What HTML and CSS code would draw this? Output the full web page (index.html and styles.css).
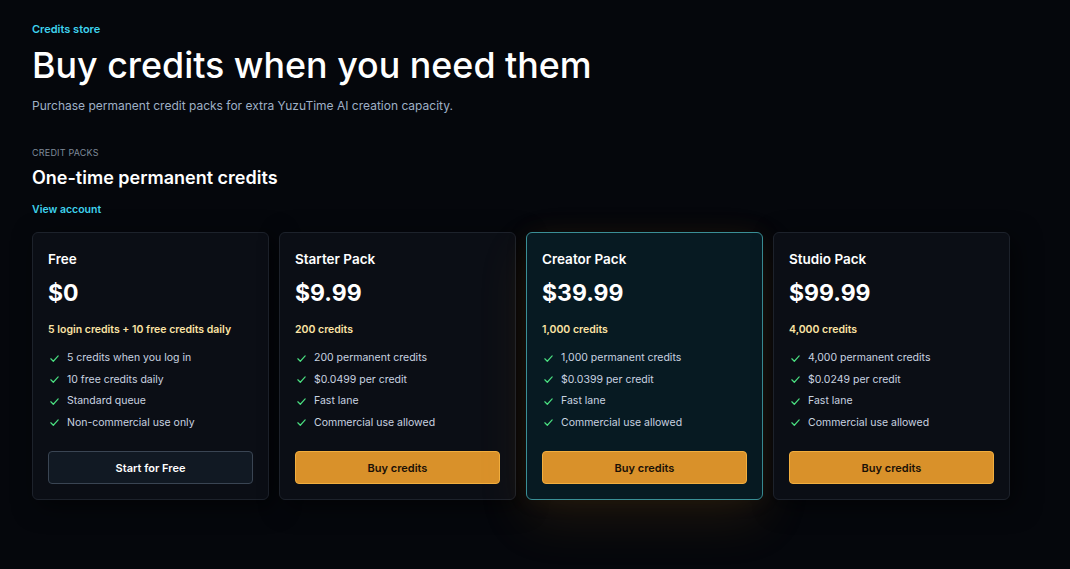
FILE: index.html
```html
<!DOCTYPE html>
<html lang="en">
<head>
<meta charset="utf-8">
<title>Credits store</title>
<link rel="stylesheet" href="styles.css">
</head>
<body>
<main class="page">
  <p class="eyebrow">Credits store</p>
  <h1 class="title">Buy credits when you need them</h1>
  <p class="subtitle">Purchase permanent credit packs for extra YuzuTime AI creation capacity.</p>

  <section class="packs">
    <p class="section-label">CREDIT PACKS</p>
    <h2 class="section-title">One-time permanent credits</h2>
    <a class="link" href="#">View account</a>

    <div class="grid">
      <div class="card">
        <h3 class="card-name">Free</h3>
        <div class="price">$0</div>
        <div class="amount">5 login credits + 10 free credits daily</div>
        <ul class="features">
          <li><svg class="check" viewBox="0 0 12 12"><path d="M2 6.3 4.7 9 10 3.2"/></svg>5 credits when you log in</li>
          <li><svg class="check" viewBox="0 0 12 12"><path d="M2 6.3 4.7 9 10 3.2"/></svg>10 free credits daily</li>
          <li><svg class="check" viewBox="0 0 12 12"><path d="M2 6.3 4.7 9 10 3.2"/></svg>Standard queue</li>
          <li><svg class="check" viewBox="0 0 12 12"><path d="M2 6.3 4.7 9 10 3.2"/></svg>Non-commercial use only</li>
        </ul>
        <button class="btn btn-ghost">Start for Free</button>
      </div>

      <div class="card">
        <h3 class="card-name">Starter Pack</h3>
        <div class="price">$9.99</div>
        <div class="amount">200 credits</div>
        <ul class="features">
          <li><svg class="check" viewBox="0 0 12 12"><path d="M2 6.3 4.7 9 10 3.2"/></svg>200 permanent credits</li>
          <li><svg class="check" viewBox="0 0 12 12"><path d="M2 6.3 4.7 9 10 3.2"/></svg>$0.0499 per credit</li>
          <li><svg class="check" viewBox="0 0 12 12"><path d="M2 6.3 4.7 9 10 3.2"/></svg>Fast lane</li>
          <li><svg class="check" viewBox="0 0 12 12"><path d="M2 6.3 4.7 9 10 3.2"/></svg>Commercial use allowed</li>
        </ul>
        <button class="btn btn-primary">Buy credits</button>
      </div>

      <div class="card card-featured">
        <h3 class="card-name">Creator Pack</h3>
        <div class="price">$39.99</div>
        <div class="amount">1,000 credits</div>
        <ul class="features">
          <li><svg class="check" viewBox="0 0 12 12"><path d="M2 6.3 4.7 9 10 3.2"/></svg>1,000 permanent credits</li>
          <li><svg class="check" viewBox="0 0 12 12"><path d="M2 6.3 4.7 9 10 3.2"/></svg>$0.0399 per credit</li>
          <li><svg class="check" viewBox="0 0 12 12"><path d="M2 6.3 4.7 9 10 3.2"/></svg>Fast lane</li>
          <li><svg class="check" viewBox="0 0 12 12"><path d="M2 6.3 4.7 9 10 3.2"/></svg>Commercial use allowed</li>
        </ul>
        <button class="btn btn-primary">Buy credits</button>
      </div>

      <div class="card">
        <h3 class="card-name">Studio Pack</h3>
        <div class="price">$99.99</div>
        <div class="amount">4,000 credits</div>
        <ul class="features">
          <li><svg class="check" viewBox="0 0 12 12"><path d="M2 6.3 4.7 9 10 3.2"/></svg>4,000 permanent credits</li>
          <li><svg class="check" viewBox="0 0 12 12"><path d="M2 6.3 4.7 9 10 3.2"/></svg>$0.0249 per credit</li>
          <li><svg class="check" viewBox="0 0 12 12"><path d="M2 6.3 4.7 9 10 3.2"/></svg>Fast lane</li>
          <li><svg class="check" viewBox="0 0 12 12"><path d="M2 6.3 4.7 9 10 3.2"/></svg>Commercial use allowed</li>
        </ul>
        <button class="btn btn-primary">Buy credits</button>
      </div>
    </div>
  </section>
</main>
</body>
</html>
```
FILE: styles.css
```css
* { box-sizing: border-box; }
html, body {
  margin: 0;
  padding: 0;
  background: #05070c;
  height: 100%;
}
body {
  font-family: Inter, "Liberation Sans", Arial, sans-serif;
  color: #f3f5f8;
  overflow: hidden;
}
.page {
  padding: 22px 32px 0 32px;
}
.eyebrow {
  margin: 0;
  font-size: 11px;
  font-weight: 600;
  color: #3fd3ee;
  line-height: 14px;
}
.title {
  margin: 6px 0 0 0;
  font-size: 35.8px;
  font-weight: 500;
  letter-spacing: 0;
  line-height: 46px;
  color: #ffffff;
}
.subtitle {
  margin: 10px 0 0 0;
  font-size: 12px;
  line-height: 16px;
  color: #9fb0c6;
}
.packs {
  margin-top: 33px;
}
.section-label {
  margin: 0;
  font-size: 9px;
  letter-spacing: 0.2px;
  line-height: 12px;
  color: #7f8a99;
}
.section-title {
  margin: 7px 0 0 0;
  font-size: 18px;
  font-weight: 600;
  line-height: 24px;
  color: #ffffff;
}
.link {
  display: inline-block;
  margin-top: 13px;
  font-size: 10.5px;
  font-weight: 600;
  line-height: 14px;
  color: #3fd3ee;
  text-decoration: none;
}
.grid {
  display: grid;
  grid-template-columns: repeat(4, 237px);
  gap: 10px;
  margin-top: 15px;
}
.card {
  background: #0b0e15;
  border: 1px solid #1d222b;
  border-radius: 6px;
  padding: 17px 15px 15px 15px;
  height: 268px;
  box-shadow: 6px 6px 24px rgba(0,0,0,0.55);
  display: flex;
  flex-direction: column;
}
.card-featured {
  background: #071a22;
  border-color: #3a8f96;
  box-shadow: 0 20px 50px rgba(190, 120, 20, 0.13), 0 0 24px rgba(160, 100, 20, 0.08);
}
.card-name {
  margin: 0;
  font-size: 13.5px;
  font-weight: 600;
  line-height: 18px;
  color: #ffffff;
}
.price {
  margin-top: 11px;
  font-size: 23px;
  font-weight: 700;
  line-height: 28px;
  color: #ffffff;
}
.amount {
  margin-top: 16px;
  font-size: 10.5px;
  font-weight: 600;
  line-height: 14px;
  color: #fbe3a4;
}
.features {
  list-style: none;
  margin: 14px 0 0 0;
  padding: 0;
}
.features li {
  display: flex;
  align-items: center;
  font-size: 10.5px;
  line-height: 14px;
  color: #c9d3e0;
  margin-bottom: 7.5px;
}
.check {
  width: 11px;
  height: 11px;
  margin: 0 7px 0 1px;
  flex: none;
}
.check path {
  fill: none;
  stroke: #4ade80;
  stroke-width: 1.3;
  stroke-linecap: round;
  stroke-linejoin: round;
}
.btn {
  margin-top: auto;
  height: 33px;
  width: 100%;
  border-radius: 4px;
  font-family: inherit;
  font-size: 11px;
  font-weight: 600;
  cursor: pointer;
}
.btn-ghost {
  background: #111923;
  border: 1px solid #3a4553;
  color: #ffffff;
}
.btn-primary {
  background: #d9912a;
  border: 1px solid #f2ae3e;
  color: #1a1006;
}
```
